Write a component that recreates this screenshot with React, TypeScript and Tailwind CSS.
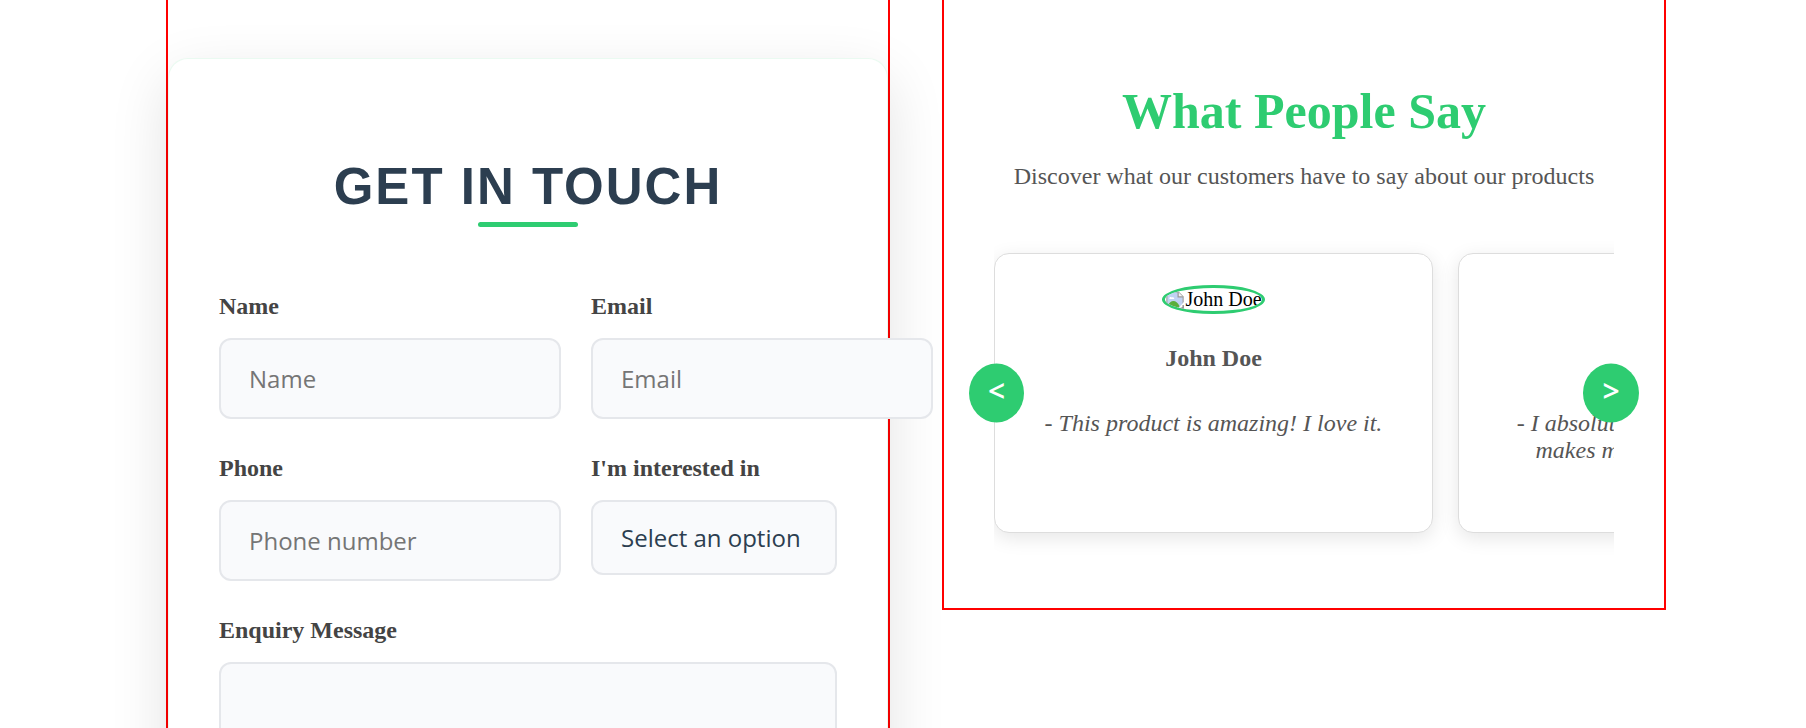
import React from "react";

const fieldClass =
  "rounded-xl border-2 border-[#e5e7eb] bg-[#f9fafc] px-7 font-['Open_Sans','Noto_Sans',sans-serif] text-2xl text-[#2c3e50] placeholder:text-[#757575] outline-none focus:border-[#2ecc71]";

function Field({ id, label, children }: { id: string; label: string; children: React.ReactNode }) {
  return (
    <div className="flex min-w-0 flex-col items-start">
      <label htmlFor={id} className="mb-[17px] text-2xl leading-[29px] font-bold text-[#444]">
        {label}
      </label>
      {children}
    </div>
  );
}

function ContactForm() {
  return (
    <section className="min-w-0 border-2 border-t-0 border-[#f00] pt-[58px]">
      <form className="rounded-[20px] border border-[#2ecc71]/10 bg-white px-[50px] pt-[98px] pb-[50px] shadow-[0_20px_60px_rgba(0,0,0,0.12)]">
        <h2 className="text-center font-['Liberation_Sans',Arial,sans-serif] text-[51px] leading-[60px] font-bold tracking-[2px] text-[#2c3e50] uppercase">
          Get in Touch
        </h2>
        <div className="mx-auto mt-[5px] mb-[65px] h-[5px] w-[100px] rounded-[3px] bg-[#2ecc71]" />
        <div className="grid grid-cols-[auto_minmax(0,1fr)] gap-x-[30px] gap-y-[35px]">
          <Field id="name" label="Name">
            <input id="name" type="text" placeholder="Name" className={`${fieldClass} h-[81px] w-[342px]`} />
          </Field>
          <Field id="email" label="Email">
            <input id="email" type="email" placeholder="Email" className={`${fieldClass} h-[81px] w-[342px]`} />
          </Field>
          <Field id="phone" label="Phone">
            <input id="phone" type="tel" placeholder="Phone number" className={`${fieldClass} h-[81px] w-[342px]`} />
          </Field>
          <Field id="interest" label="I'm interested in">
            <select id="interest" className={`${fieldClass} h-[75px] w-full appearance-none`}>
              <option>Select an option</option>
            </select>
          </Field>
          <div className="col-span-2">
            <Field id="message" label="Enquiry Message">
              <textarea id="message" rows={5} className={`${fieldClass} h-48 w-full resize-none py-6`} />
            </Field>
          </div>
        </div>
      </form>
    </section>
  );
}

function BrokenImageIcon() {
  return (
    <svg viewBox="0 0 16 16" className="mt-0.5 size-5 shrink-0" aria-hidden="true">
      <path d="M1.5 1.5h9l4 4v9h-13z" fill="#c0d2f3" stroke="#a6a6a6" />
      <path d="M10.5 1.5v4h4" fill="#f4f4f4" stroke="#9a9a9a" />
      <path d="M3.5 6.6c0-1 1.500-1.500 2-.6 1-.7 2.200.1 1.800 1.100H3.600z" fill="#fff" />
      <path d="M2 14v-1.500C4.500 7.500 9 7.500 11.500 12.500V14z" fill="#5aae3c" />
      <path d="M9.500 16 16 8.500v2.500L12 16z" fill="#fff" />
      <path d="M12.500 14.500h2V12" fill="none" stroke="#8c8c8c" />
    </svg>
  );
}

function TestimonialCard({ name, quote }: { name: string; quote: string }) {
  return (
    <article className="flex h-[280px] w-[439px] shrink-0 flex-col items-center rounded-[15px] border border-[#ddd] bg-white px-10 pt-[31px] text-center text-2xl leading-[27px] text-[#555] shadow-[0_5px_19px_rgba(0,0,0,0.1)]">
      <div className="flex h-[29px] items-start overflow-hidden rounded-[50%] border-[3px] border-[#2ecc71] text-xl leading-[23px] text-black">
        <BrokenImageIcon />
        <span>{name}</span>
      </div>
      <h3 className="mt-[31px] font-bold">{name}</h3>
      <p className="mt-[38px] italic">{quote}</p>
    </article>
  );
}

const arrowClass =
  "absolute top-1/2 h-[59px] -translate-y-1/2 rounded-[50%] bg-[#2ecc71] pb-1 font-['Open_Sans','Noto_Sans',sans-serif] text-[30px] leading-none font-semibold text-white";

function Testimonials() {
  return (
    <section className="min-w-0 self-start border-2 border-t-0 border-[#f00] px-[50px] pt-[82px] pb-[51px] text-center">
      <h2 className="text-[50px] leading-[58px] font-bold text-[#2ecc71]">What People Say</h2>
      <p className="mt-[23px] text-2xl leading-[27px] text-[#555]">
        Discover what our customers have to say about our products
      </p>
      <div className="relative mt-[38px]">
        <div className="flex gap-[25px] overflow-hidden pt-[25px] pb-6">
          <TestimonialCard name="John Doe" quote="- This product is amazing! I love it." />
          <TestimonialCard name="Jane Doe" quote="- I absolutely love this product! It makes my life so much easier." />
        </div>
        <button type="button" aria-label="Previous" className={`${arrowClass} -left-[25px] w-[55px]`}>
          &lt;
        </button>
        <button type="button" aria-label="Next" className={`${arrowClass} -right-[25px] w-14`}>
          &gt;
        </button>
      </div>
    </section>
  );
}

export default function App() {
  return (
    <main className="h-screen overflow-hidden bg-white pl-[26px] font-['Liberation_Serif','Times_New_Roman',serif]">
      <div className="mx-auto grid max-w-[1500px] grid-cols-2 gap-[52px]">
        <ContactForm />
        <Testimonials />
      </div>
    </main>
  );
}
